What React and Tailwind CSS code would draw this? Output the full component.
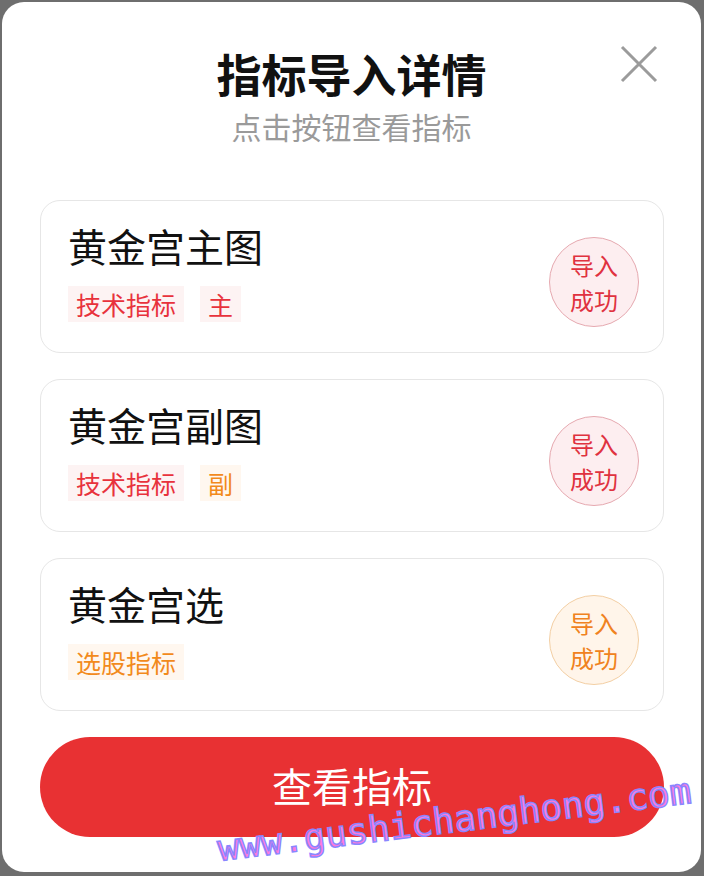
import React from "react";

const cards = [
  {
    title: "黄金宫主图",
    tags: [
      { t: "技术指标", c: "text-[#e8323c]", bg: "bg-[#fdf3f3]" },
      { t: "主", c: "text-[#e8323c]", bg: "bg-[#fdf3f3]" },
    ],
    badge: "red",
  },
  {
    title: "黄金宫副图",
    tags: [
      { t: "技术指标", c: "text-[#e8323c]", bg: "bg-[#fdf3f3]" },
      { t: "副", c: "text-[#f28a1c]", bg: "bg-[#fff7ef]" },
    ],
    badge: "red",
  },
  {
    title: "黄金宫选",
    tags: [{ t: "选股指标", c: "text-[#f28a1c]", bg: "bg-[#fff7ef]" }],
    badge: "orange",
  },
];

function Badge({ kind }) {
  const cls =
    kind === "red"
      ? "border-[#e6a9b0] bg-[#fdeef0] text-[#e0323f]"
      : "border-[#f3cfa4] bg-[#fff5ea] text-[#f08220]";
  return (
    <div
      className={`mt-[10px] flex h-[90px] w-[90px] shrink-0 flex-col items-center justify-center rounded-full border ${cls} text-[24px] leading-[35px]`}
    >
      <span>导入</span>
      <span>成功</span>
    </div>
  );
}

export default function App() {
  return (
    <div
      className="relative h-[876px] w-[704px] overflow-hidden bg-[#6e6e6e] pt-[2px] pl-[2px] pr-[3px] pb-[4px]"
      style={{ fontFamily: '"Noto Sans CJK SC", "Noto Sans", sans-serif' }}
    >
      <div className="relative flex h-full w-full flex-col rounded-[22px] bg-white">
        <div className="relative flex flex-col items-center pt-[44px]">
          <h1 className="text-[45px] font-bold leading-[56px] text-[#111]">指标导入详情</h1>
          <p className="mt-[4px] text-[30px] leading-[40px] text-[#9a9a9a]">点击按钮查看指标</p>
          <button className="absolute right-[42px] top-[42px] h-[40px] w-[40px]">
            <svg viewBox="0 0 40 40" className="h-full w-full">
              <path d="M3 3 L37 37 M37 3 L3 37" stroke="#9b9b9b" strokeWidth="3" />
            </svg>
          </button>
        </div>

        <div className="mt-[54px] flex flex-col gap-[26px] pl-[38px] pr-[37px]">
          {cards.map((c) => (
            <div
              key={c.title}
              className="flex h-[153px] items-center justify-between rounded-[20px] border border-[#e6e6e6] pl-[27px] pr-[24px]"
            >
              <div className="flex flex-col self-start pt-[20px]">
                <div className="text-[39px] leading-[48px] text-[#111]">{c.title}</div>
                <div className="mt-[17px] flex gap-[16px]">
                  {c.tags.map((tg) => (
                    <span
                      key={tg.t}
                      className={`${tg.bg} ${tg.c} px-[8px] text-[25px] leading-[36px]`}
                    >
                      {tg.t}
                    </span>
                  ))}
                </div>
              </div>
              <Badge kind={c.badge} />
            </div>
          ))}
        </div>

        <div className="mt-[26px] pl-[38px] pr-[37px]">
          <button className="flex h-[100px] w-full items-center justify-center rounded-full bg-[#e83133] pb-[4px] text-[40px] leading-[50px] text-white">
            查看指标
          </button>
        </div>
      </div>

      <div
        className="pointer-events-none absolute left-[216px] top-[800px] origin-center -rotate-[7deg] whitespace-nowrap text-[36px] leading-[40px] text-[#ff7ad9] [-webkit-text-stroke:1.5px_#8a86ff]"
        style={{ fontFamily: '"DejaVu Sans Mono", monospace' }}
      >
        www.gushichanghong.com
      </div>
    </div>
  );
}
